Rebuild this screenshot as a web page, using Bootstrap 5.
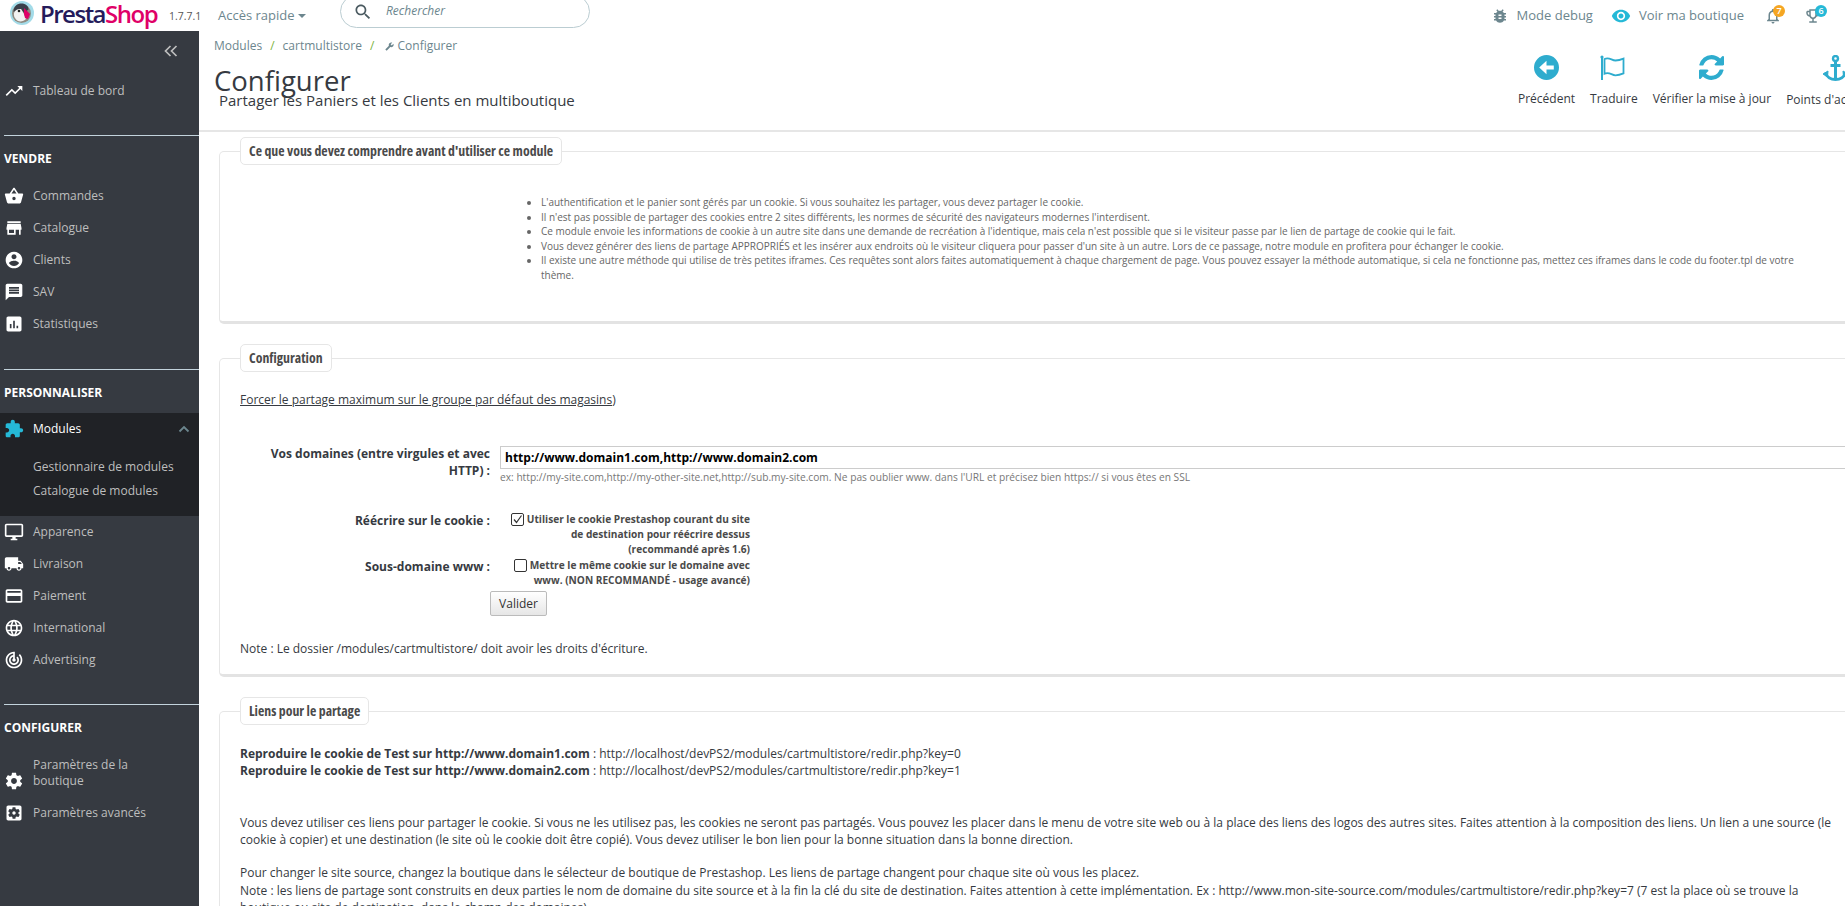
<!DOCTYPE html>
<html lang="fr">
  <head>
    <meta charset="UTF-8" />
    <meta name="viewport" content="width=device-width, initial-scale=1" />
    <title>Configurer - PrestaShop</title>
    <link href="https://cdn.jsdelivr.net/npm/bootstrap@5.3.0/dist/css/bootstrap.min.css" rel="stylesheet" />
    <style>
      html, body { height: 906px; overflow: hidden; }
      body { font-family: "Open Sans", sans-serif; font-size: 12px; color: #363a41; background: #fff; }
      .ps-top { height: 31px; overflow: hidden; color: #6c868e; }
      .ps-logo { width: 169px; flex: none; padding-left: 10px; }
      .ps-word { font-family: "Open Sans", sans-serif; font-size: 24px; font-weight: 600; letter-spacing: -1.5px; color: #251b5b; line-height: 31px; margin-left: 6px; margin-top: -5px; }
      .ps-word span { color: #df0067; }
      .ps-ver { width: 49px; flex: none; font-size: 10.5px; margin-top: 3px; color: #555; }
      .ps-quick { width: 122px; flex: none; font-size: 13px; }
      .ps-caret { display: inline-block; border: 4px solid transparent; border-top-color: #6c868e; border-bottom: 0; margin-left: 3px; vertical-align: middle; }
      .ps-search { width: 250px; height: 33px; flex: none; margin-top: -8px; padding: 8px 0 0 12px; border: 1px solid #bbcdd2; border-radius: 17px; }
      .ps-search em { margin-left: 13px; margin-top: -2px; font-size: 12px; }
      .ps-top-r { margin-left: auto; padding-right: 23px; font-size: 13px; }
      .ps-count { position: absolute; top: -2px; right: -5px; width: 12px; height: 12px; border-radius: 50%; color: #fff; font-size: 9px; line-height: 12px; text-align: center; font-weight: 600; }
      .ps-side { width: 199px; height: 875px; flex: none; background: #363a41; color: #bebebe; font-size: 12px; }
      .ps-collapse { height: 43px; padding: 10px 21px 0 0; text-align: right; }
      .ps-sep { height: 1px; margin: 0 0 0 4px; background: #c3d3dc; opacity: 1; border: 0; }
      .ps-cap { color: #fff; font-weight: 700; font-size: 12px; padding-left: 4px; height: 44px; line-height: 46px; }
      .ps-item { height: 32px; padding-left: 4px; color: #bebebe; text-decoration: none; }
      .ps-item svg { flex: none; margin-right: 9px; fill: #fff; }
      .ps-first { padding-top: 2px; }
      .ps-two { height: 48px; line-height: 16px; }
      .ps-on { background: #202226; height: 103px; }
      .ps-on .ps-item { color: #fff; }
      .ps-sub { display: block; padding-left: 33px; height: 24px; line-height: 24px; color: #bebebe; }
      .ps-main { width: 1646px; flex: none; overflow: hidden; }
      .ps-head { height: 101px; border-bottom: 2px solid #e6e6e6; }
      .ps-head-l { width: 1319px; flex: none; padding: 7px 0 0 15px; }
      .ps-crumb { font-size: 12px; color: #6c868e; line-height: 16px; }
      .ps-crumb i { font-style: normal; color: #7cb342; margin: 0 8px; }
      .ps-title { font-size: 27.5px; font-weight: 400; line-height: 40px; margin: 7px 0 0; color: #363a41; }
      .ps-subt { font-size: 15px; line-height: 20px; margin: -11px 0 0 5px; }
      .ps-tools { flex: none; padding-top: 24px; gap: 15px; }
      .ps-tool { text-align: center; white-space: nowrap; line-height: 16px; }
      .ps-tool svg { display: block; margin: 0 auto 11px; fill: #2eacce; }
      .ps-body { width: 1800px; padding: 5px 0 0 20px; }
      .ps-fs { border: 1px solid #e6e6e6; border-bottom: 3px solid #e3e3e3; border-radius: 5px; padding: 0 20px; margin: 0 0 20px; }
      .ps-fs legend { float: none; width: auto; margin: 0; padding: 0 8px; height: 28px; line-height: 26px; background: #fff; border: 1px solid #e6e6e6; border-radius: 5px; font-family: "Open Sans", sans-serif; font-stretch: 75%; font-weight: 700; font-size: 13.8px; color: #4a4a4a; }
      .ps-list { margin: 30px 0 39px 291px; padding: 0 0 0 10px; font-size: 10px; line-height: 14.5px; color: #666; width: 1270px; }
      .ps-force { margin: 20px 0 37px; line-height: 16px; }
      .ps-force a { color: #363a41; }
      .ps-row { display: flex; }
      .ps-lab { width: 250px; flex: none; text-align: right; padding-right: 0; font-weight: 700; font-size: 12px; line-height: 17px; }
      .ps-field { margin-left: 10px; width: 1400px; padding-top: 1px; }
      .ps-input { display: block; width: 100%; height: 23px; border: 1px solid #ccc; padding: 0 4px; font-weight: 700; font-size: 12px; color: #000; line-height: 21px; }
      .ps-help { font-size: 10.2px; color: #777; line-height: 16px; }
      .ps-chk { width: 260px; margin-left: 0; text-align: right; font-weight: 700; font-size: 10.15px; line-height: 15px; color: #4a4a4a; }
      .ps-box { display: inline-block; width: 13px; height: 13px; border: 1px solid #333; border-radius: 2px; vertical-align: -3px; margin-right: 3px; background: #fff; }
      .ps-box svg { display: block; }
      .ps-btn { margin: 3px 0 0 250px; width: 57px; height: 25px; padding: 0; font-size: 12px; color: #333; border: 1px solid #bbb; border-radius: 2px; background: linear-gradient(#fff, #e6e6e6); }
      .ps-note { margin: 25px 0 17px; line-height: 16px; }
      .ps-links { margin: 20px 0 0; line-height: 17px; }
      .ps-para { line-height: 17px; margin: 35px 0 16px; white-space: nowrap; }
      .ps-para2 { line-height: 17.5px; margin: 0; white-space: nowrap; }
    </style>
  </head>
  <body>
    <header class="ps-top d-flex align-items-center">
      <div class="ps-logo d-flex align-items-center">
        <svg width="24" height="26" viewBox="0 0 24 26" style="margin-top:-5px">
          <circle cx="12" cy="13" r="12" fill="#a3dbe8" />
          <circle cx="11.500" cy="13.500" r="9.500" fill="#8f8a80" />
          <path d="M3.500 12c0-6 4-8.500 8-8.500s7 2.500 7 6L14 13l-3-4-4 1z" fill="#3a3f4a" />
          <path d="M4 13c1-3 4-4.500 7-4l3 5 2 5c-2 2-5 3-8 2-3-1.500-4.500-5-4-8z" fill="#f2f2f2" />
          <path d="M14 8l6 6-2 5-3-1-1-4z" fill="#df0067" />
          <circle cx="9" cy="11" r="1.300" fill="#222" />
        </svg>
        <span class="ps-word">Presta<span>Shop</span></span>
      </div>
      <span class="ps-ver">1.7.7.1</span>
      <span class="ps-quick">Accès rapide<span class="ps-caret"></span></span>
      <div class="ps-search d-flex align-items-start">
        <svg width="20" height="20" viewBox="0 0 24 24" fill="#4a5a60" style="margin-top:-2px"><path d="M15.5 14h-.79l-.28-.27C15.41 12.59 16 11.11 16 9.5 16 5.91 13.09 3 9.5 3S3 5.91 3 9.5 5.91 16 9.5 16c1.61 0 3.09-.59 4.23-1.57l.27.28v.79l5 4.99L20.49 19l-4.99-5zm-6 0C7.01 14 5 11.99 5 9.5S7.01 5 9.5 5 14 7.01 14 9.5 11.99 14 9.5 14z"/></svg>
        <em>Rechercher</em>
      </div>
      <div class="ps-top-r d-flex align-items-center">
        <svg class="me-2" width="18" height="18" viewBox="0 0 24 24" fill="#6c868e"><path d="M20 8h-2.81c-.45-.78-1.07-1.45-1.82-1.96L17 4.41 15.59 3l-2.17 2.17C12.96 5.06 12.49 5 12 5c-.49 0-.96.06-1.41.17L8.41 3 7 4.41l1.62 1.63C7.88 6.55 7.26 7.22 6.81 8H4v2h2.09c-.05.33-.09.66-.09 1v1H4v2h2v1c0 .34.04.67.09 1H4v2h2.81c1.04 1.79 2.97 3 5.19 3s4.15-1.21 5.19-3H20v-2h-2.09c.05-.33.09-.66.09-1v-1h2v-2h-2v-1c0-.34-.04-.67-.09-1H20V8zm-6 8h-4v-2h4v2zm0-4h-4v-2h4v2z"/></svg>
        <span style="margin-right:18px">Mode debug</span>
        <svg class="me-2" width="20" height="20" viewBox="0 0 24 24" fill="#25b9d7"><path d="M12 4.5C7 4.5 2.730 7.610 1 12c1.730 4.390 6 7.500 11 7.500s9.270-3.110 11-7.500c-1.730-4.390-6-7.500-11-7.500zM12 17c-2.760 0-5-2.240-5-5s2.240-5 5-5 5 2.240 5 5-2.240 5-5 5zm0-8c-1.660 0-3 1.340-3 3s1.340 3 3 3 3-1.340 3-3-1.340-3-3-3z"/></svg>
        <span style="margin-right:20px">Voir ma boutique</span>
        <span class="position-relative" style="margin-right:22px;height:18px">
          <svg class="d-block" width="18" height="18" viewBox="0 0 24 24" fill="#6c868e"><path d="M12 22c1.100 0 2-.9 2-2h-4c0 1.100.9 2 2 2zm6-6v-5c0-3.070-1.630-5.640-4.500-6.320V4c0-.83-.67-1.500-1.500-1.500s-1.500.67-1.500 1.500v.68C7.640 5.360 6 7.920 6 11v5l-2 2v1h16v-1l-2-2zm-2 1H8v-6c0-2.480 1.510-4.500 4-4.500s4 2.020 4 4.500v6z"/></svg>
          <span class="ps-count" style="background:#f5a623;right:-3px">7</span>
        </span>
        <span class="position-relative" style="height:18px">
          <svg class="d-block" width="18" height="18" viewBox="0 0 24 24" fill="#6c868e"><path d="M19 5h-2V3H7v2H5c-1.100 0-2 .9-2 2v1c0 2.550 1.920 4.630 4.390 4.940.63 1.500 1.980 2.630 3.610 2.960V19H7v2h10v-2h-4v-3.100c1.630-.33 2.980-1.460 3.610-2.960C19.080 12.630 21 10.550 21 8V7c0-1.100-.9-2-2-2zM5 8V7h2v3.820C5.840 10.400 5 9.300 5 8zm7 6c-1.650 0-3-1.350-3-3V5h6v6c0 1.650-1.350 3-3 3zm7-6c0 1.300-.84 2.400-2 2.820V7h2v1z"/></svg>
          <span class="ps-count" style="background:#25b9d7">6</span>
        </span>
      </div>
    </header>

    <div class="d-flex">
      <nav class="ps-side">
        <div class="ps-collapse">
          <svg width="14" height="12" viewBox="0 0 14 12" fill="none" stroke="#bebebe" stroke-width="1.700"><path d="M6.500 1L1.500 6l5 5M12.500 1l-5 5 5 5"/></svg>
        </div>
        <a class="ps-item ps-first d-flex align-items-center" href="#">
          <svg width="20" height="20" viewBox="0 0 24 24"><path d="M16 6l2.290 2.290-4.880 4.880-4-4L2 16.590 3.410 18l6-6 4 4 6.300-6.290L22 12V6z"/></svg>Tableau de bord
        </a>
        <hr class="ps-sep" style="margin-top:29px" />
        <div class="ps-cap">VENDRE</div>
        <a class="ps-item d-flex align-items-center" href="#"><svg width="20" height="20" viewBox="0 0 24 24"><path d="M17.210 9l-4.380-6.560c-.19-.28-.51-.42-.83-.42-.32 0-.64.14-.83.43L6.790 9H2c-.55 0-1 .45-1 1 0 .09.01.18.04.27l2.540 9.270c.23.84 1 1.460 1.920 1.460h13c.92 0 1.690-.62 1.930-1.460l2.540-9.270L23 10c0-.55-.45-1-1-1h-4.790zM9 9l3-4.400L15 9H9zm3 8c-1.100 0-2-.9-2-2s.9-2 2-2 2 .9 2 2-.9 2-2 2z"/></svg>Commandes</a>
        <a class="ps-item d-flex align-items-center" href="#"><svg width="20" height="20" viewBox="0 0 24 24"><path d="M20 4H4v2h16V4zm1 10v-2l-1-5H4l-1 5v2h1v6h10v-6h4v6h2v-6h1zm-9 4H6v-4h6v4z"/></svg>Catalogue</a>
        <a class="ps-item d-flex align-items-center" href="#"><svg width="20" height="20" viewBox="0 0 24 24"><path d="M12 2C6.480 2 2 6.480 2 12s4.480 10 10 10 10-4.480 10-10S17.520 2 12 2zm0 3c1.660 0 3 1.340 3 3s-1.340 3-3 3-3-1.340-3-3 1.340-3 3-3zm0 14.200c-2.500 0-4.710-1.280-6-3.220.03-1.990 4-3.080 6-3.080 1.990 0 5.970 1.090 6 3.080-1.290 1.940-3.500 3.220-6 3.220z"/></svg>Clients</a>
        <a class="ps-item d-flex align-items-center" href="#"><svg width="20" height="20" viewBox="0 0 24 24"><path d="M20 2H4c-1.100 0-1.990.9-1.990 2L2 22l4-4h14c1.100 0 2-.9 2-2V4c0-1.100-.9-2-2-2zm-2 12H6v-2h12v2zm0-3H6V9h12v2zm0-3H6V6h12v2z"/></svg>SAV</a>
        <a class="ps-item d-flex align-items-center" href="#"><svg width="20" height="20" viewBox="0 0 24 24"><path d="M19 3H5c-1.100 0-2 .9-2 2v14c0 1.100.9 2 2 2h14c1.100 0 2-.9 2-2V5c0-1.100-.9-2-2-2zM9 17H7v-5h2v5zm4 0h-2V8h2v9zm4 0h-2v-3h2v3z"/></svg>Statistiques</a>
        <hr class="ps-sep" style="margin-top:29px" />
        <div class="ps-cap" style="height:43px">PERSONNALISER</div>
        <div class="ps-on">
          <a class="ps-item d-flex align-items-center" href="#">
            <svg width="20" height="20" viewBox="0 0 24 24" style="fill:#25b9d7"><path d="M20.500 11H19V7c0-1.100-.9-2-2-2h-4V3.500C13 2.120 11.880 1 10.500 1S8 2.120 8 3.500V5H4c-1.100 0-1.990.9-1.990 2v3.800H3.500c1.490 0 2.700 1.210 2.700 2.700s-1.210 2.700-2.700 2.700H2V20c0 1.100.9 2 2 2h3.800v-1.500c0-1.490 1.210-2.700 2.700-2.700 1.490 0 2.700 1.210 2.700 2.700V22H17c1.100 0 2-.9 2-2v-4h1.500c1.380 0 2.500-1.120 2.500-2.500S21.880 11 20.500 11z"/></svg>Modules
            <svg class="ms-auto" width="12" height="8" viewBox="0 0 12 8" style="fill:none;stroke:#6c868e;stroke-width:1.800;margin-right:9px"><path d="M1.500 6.500L6 2l4.500 4.500"/></svg>
          </a>
          <div style="height:10px"></div>
          <a class="ps-sub text-decoration-none" href="#">Gestionnaire de modules</a>
          <a class="ps-sub text-decoration-none" href="#">Catalogue de modules</a>
        </div>
        <a class="ps-item d-flex align-items-center" href="#"><svg width="20" height="20" viewBox="0 0 24 24"><path d="M21 2H3c-1.100 0-2 .9-2 2v12c0 1.100.9 2 2 2h7v2H8v2h8v-2h-2v-2h7c1.100 0 2-.9 2-2V4c0-1.100-.9-2-2-2zm0 14H3V4h18v12z"/></svg>Apparence</a>
        <a class="ps-item d-flex align-items-center" href="#"><svg width="20" height="20" viewBox="0 0 24 24"><path d="M20 8h-3V4H3c-1.100 0-2 .9-2 2v11h2c0 1.660 1.340 3 3 3s3-1.340 3-3h6c0 1.660 1.340 3 3 3s3-1.340 3-3h2v-5l-3-4zM6 18.500c-.83 0-1.500-.67-1.500-1.500s.67-1.500 1.500-1.500 1.500.67 1.500 1.500-.67 1.500-1.500 1.500zm13.500-9l1.960 2.500H17V9.500h2.500zm-1.500 9c-.83 0-1.500-.67-1.500-1.500s.67-1.500 1.500-1.500 1.500.67 1.500 1.500-.67 1.500-1.500 1.500z"/></svg>Livraison</a>
        <a class="ps-item d-flex align-items-center" href="#"><svg width="20" height="20" viewBox="0 0 24 24"><path d="M20 4H4c-1.110 0-1.990.89-1.990 2L2 18c0 1.110.89 2 2 2h16c1.110 0 2-.89 2-2V6c0-1.110-.89-2-2-2zm0 14H4v-6h16v6zm0-10H4V6h16v2z"/></svg>Paiement</a>
        <a class="ps-item d-flex align-items-center" href="#"><svg width="20" height="20" viewBox="0 0 24 24"><path d="M11.990 2C6.470 2 2 6.480 2 12s4.470 10 9.990 10C17.520 22 22 17.520 22 12S17.520 2 11.990 2zm6.930 6h-2.950c-.32-1.250-.78-2.450-1.380-3.560 1.840.63 3.370 1.910 4.330 3.560zM12 4.040c.83 1.200 1.480 2.530 1.910 3.960h-3.820c.43-1.430 1.080-2.760 1.910-3.960zM4.260 14C4.100 13.360 4 12.690 4 12s.1-1.360.26-2h3.380c-.08.66-.14 1.320-.14 2 0 .68.06 1.340.14 2H4.260zm.82 2h2.950c.32 1.250.78 2.450 1.380 3.560-1.840-.63-3.370-1.900-4.330-3.560zm2.950-8H5.080c.96-1.660 2.490-2.930 4.330-3.560C8.810 5.550 8.350 6.750 8.030 8zM12 19.960c-.83-1.200-1.480-2.530-1.910-3.960h3.820c-.43 1.430-1.080 2.760-1.910 3.960zM14.340 14H9.660c-.09-.66-.16-1.320-.16-2 0-.68.07-1.350.16-2h4.680c.09.65.16 1.320.16 2 0 .68-.07 1.340-.16 2zm.25 5.560c.6-1.110 1.060-2.310 1.380-3.560h2.950c-.96 1.650-2.490 2.930-4.330 3.560zM16.360 14c.08-.66.14-1.320.14-2 0-.68-.06-1.340-.14-2h3.380c.16.64.26 1.310.26 2s-.1 1.360-.26 2h-3.380z"/></svg>International</a>
        <a class="ps-item d-flex align-items-center" href="#"><svg width="20" height="20" viewBox="0 0 24 24"><path d="M19.070 4.930l-1.410 1.410C19.100 7.790 20 9.790 20 12c0 4.420-3.580 8-8 8s-8-3.580-8-8c0-4.080 3.050-7.440 7-7.930v2.020C8.160 6.570 6 9.030 6 12c0 3.310 2.690 6 6 6s6-2.690 6-6c0-1.660-.67-3.160-1.760-4.240l-1.410 1.410C15.550 9.900 16 10.900 16 12c0 2.210-1.790 4-4 4s-4-1.790-4-4c0-1.860 1.280-3.410 3-3.860v2.140c-.6.35-1 .98-1 1.720 0 1.100.9 2 2 2s2-.9 2-2c0-.74-.4-1.380-1-1.720V2h-1C6.480 2 2 6.480 2 12s4.480 10 10 10 10-4.480 10-10c0-2.760-1.120-5.260-2.930-7.070z"/></svg>Advertising</a>
        <hr class="ps-sep" style="margin-top:28px" />
        <div class="ps-cap">CONFIGURER</div>
        <a class="ps-item ps-two d-flex align-items-end" href="#"><svg width="20" height="20" viewBox="0 0 24 24" style="margin-bottom:6px"><path d="M19.430 12.980c.04-.32.07-.64.07-.98s-.03-.66-.07-.98l2.110-1.650c.19-.15.24-.42.12-.64l-2-3.460c-.12-.22-.39-.3-.61-.22l-2.490 1c-.52-.4-1.080-.73-1.690-.98l-.38-2.650C14.460 2.180 14.250 2 14 2h-4c-.25 0-.46.18-.49.42l-.38 2.650c-.61.25-1.170.59-1.690.98l-2.490-1c-.23-.09-.49 0-.61.22l-2 3.460c-.13.22-.07.49.12.64l2.110 1.650c-.04.32-.07.65-.07.98s.03.66.07.98l-2.110 1.650c-.19.15-.24.42-.12.64l2 3.460c.12.22.39.3.61.22l2.490-1c.52.4 1.080.73 1.690.98l.38 2.650c.03.24.24.42.49.42h4c.25 0 .46-.18.49-.42l.38-2.650c.61-.25 1.170-.59 1.690-.98l2.490 1c.23.09.49 0 .61-.22l2-3.460c.12-.22.07-.49-.12-.64l-2.110-1.650zM12 15.500c-1.930 0-3.500-1.570-3.500-3.500s1.570-3.500 3.500-3.500 3.500 1.570 3.500 3.500-1.570 3.500-3.500 3.500z"/></svg><span style="padding-bottom:8px">Paramètres de la<br />boutique</span></a>
        <a class="ps-item d-flex align-items-center" href="#"><svg width="20" height="20" viewBox="0 0 24 24"><path d="M12 10c-1.100 0-2 .9-2 2s.9 2 2 2 2-.9 2-2-.9-2-2-2zm7-7H5c-1.110 0-2 .9-2 2v14c0 1.100.89 2 2 2h14c1.110 0 2-.9 2-2V5c0-1.100-.89-2-2-2zm-1.750 9c0 .23-.02.46-.05.68l1.480 1.160c.13.11.17.3.08.45l-1.400 2.420c-.09.15-.27.21-.43.15l-1.740-.7c-.36.28-.76.51-1.180.69l-.26 1.850c-.03.17-.18.3-.35.3h-2.800c-.17 0-.32-.13-.35-.29l-.26-1.850c-.43-.18-.82-.41-1.180-.69l-1.740.7c-.16.06-.34 0-.43-.15l-1.400-2.420c-.09-.15-.05-.34.08-.45l1.480-1.160c-.03-.23-.05-.46-.05-.69 0-.23.02-.46.05-.68l-1.480-1.160c-.13-.11-.17-.3-.08-.45l1.400-2.420c.09-.15.27-.21.43-.15l1.740.7c.36-.28.76-.51 1.180-.69l.26-1.850c.03-.17.18-.3.35-.3h2.800c.17 0 .32.13.35.29l.26 1.850c.43.18.82.41 1.180.69l1.740-.7c.16-.06.34 0 .43.15l1.400 2.420c.09.15.05.34-.08.45l-1.480 1.160c.03.23.05.46.05.69z"/></svg>Paramètres avancés</a>
      </nav>

      <main class="ps-main">
        <div class="ps-head d-flex">
          <div class="ps-head-l">
            <div class="ps-crumb">Modules<i>/</i>cartmultistore<i>/</i>
              <svg width="9" height="9" viewBox="0 0 24 24" fill="#6c868e" style="transform:scaleX(-1)"><path d="M22.700 19l-9.100-9.100c.9-2.300.4-5-1.500-6.900-2-2-5-2.400-7.400-1.300L9 6 6 9 1.600 4.700C.4 7.100.9 10.100 2.900 12.100c1.900 1.900 4.600 2.400 6.900 1.500l9.100 9.100c.4.4 1 .4 1.400 0l2.300-2.300c.5-.4.5-1.100.1-1.400z"/></svg>
              Configurer</div>
            <h1 class="ps-title">Configurer</h1>
            <div class="ps-subt">Partager les Paniers et les Clients en multiboutique</div>
          </div>
          <div class="ps-tools d-flex">
            <div class="ps-tool">
              <svg width="25" height="25" viewBox="0 0 24 24"><path d="M12 0a12 12 0 100 24 12 12 0 000-24zm7 14h-7v4.500L5 12l7-6.500V10h7z"/></svg>
              Précédent
            </div>
            <div class="ps-tool">
              <svg width="27" height="25" viewBox="0 0 27 25" style="fill:none;stroke:#2eacce;stroke-width:1.800"><path d="M2 2.500V25" stroke-width="2"/><circle cx="2" cy="2" r="1.600" fill="#2eacce" stroke="none"/><path d="M4.500 4c5-2.200 7 1.500 11 1.500 2.500 0 5-.6 8-1.900v14.800c-3 1.300-5.500 1.900-8 1.900-4 0-6-3.700-11-1.500z"/></svg>
              Traduire
            </div>
            <div class="ps-tool">
              <svg width="25" height="25" viewBox="0 0 1536 1536"><path d="M1511 928q0 5-1 7-64 268-268 434.500t-478 166.500q-146 0-282.500-55t-243.500-157l-129 129q-19 19-45 19t-45-19-19-45v-448q0-26 19-45t45-19h448q26 0 45 19t19 45-19 45l-137 137q71 66 161 102t187 36q134 0 250-65t186-179q11-17 53-117 8-23 30-23h192q13 0 22.500 9.500t9.500 22.500zm25-800v448q0 26-19 45t-45 19h-448q-26 0-45-19t-19-45 19-45l138-138q-148-137-349-137-134 0-250 65t-186 179q-11 17-53 117-8 23-30 23h-199q-13 0-22.500-9.500t-9.500-22.500v-7q65-268 270-434.500t480-166.500q146 0 284 55.500t245 156.500l130-129q19-19 45-19t45 19 19 45z"/></svg>
              Vérifier la mise à jour
            </div>
            <div class="ps-tool">
              <svg width="25" height="26" viewBox="0 0 25 26" style="fill:none;stroke:#2eacce;stroke-width:3"><circle cx="12.500" cy="3.500" r="2.500" stroke-width="2.400"/><path d="M12.500 6v18.500M7.500 10.500h10M2.500 17.500c1 4.500 5.500 7 10 7s9-2.500 10-7"/><path d="M0 19l5-3-.5 6zM25 19l-5-3 .5 6z" fill="#2eacce" stroke-width="1"/></svg>
              Points d'accroche
            </div>
          </div>
        </div>

        <div class="ps-body">
          <fieldset class="ps-fs">
            <legend>Ce que vous devez comprendre avant d'utiliser ce module</legend>
            <ul class="ps-list">
              <li>L'authentification et le panier sont gérés par un cookie. Si vous souhaitez les partager, vous devez partager le cookie.</li>
              <li>Il n'est pas possible de partager des cookies entre 2 sites différents, les normes de sécurité des navigateurs modernes l'interdisent.</li>
              <li>Ce module envoie les informations de cookie à un autre site dans une demande de recréation à l'identique, mais cela n'est possible que si le visiteur passe par le lien de partage de cookie qui le fait.</li>
              <li>Vous devez générer des liens de partage APPROPRIÉS et les insérer aux endroits où le visiteur cliquera pour passer d'un site à un autre. Lors de ce passage, notre module en profitera pour échanger le cookie.</li>
              <li>Il existe une autre méthode qui utilise de très petites iframes. Ces requêtes sont alors faites automatiquement à chaque chargement de page. Vous pouvez essayer la méthode automatique, si cela ne fonctionne pas, mettez ces iframes dans le code du footer.tpl de votre<br />thème.</li>
            </ul>
          </fieldset>

          <fieldset class="ps-fs">
            <legend>Configuration</legend>
            <p class="ps-force"><a href="#">Forcer le partage maximum sur le groupe par défaut des magasins</a>)</p>
            <div class="ps-row" style="margin-bottom:27px">
              <div class="ps-lab">Vos domaines (entre virgules et avec<br />HTTP) :</div>
              <div class="ps-field">
                <div class="ps-input">http://www.domain1.com,http://www.domain2.com</div>
                <div class="ps-help">ex: http://my-site.com,http://my-other-site.net,http://sub.my-site.com. Ne pas oublier www. dans l'URL et précisez bien https:// si vous êtes en SSL</div>
              </div>
            </div>
            <div class="ps-row">
              <div class="ps-lab">Réécrire sur le cookie :</div>
              <div class="ps-chk"><span class="ps-box"><svg width="11" height="11" viewBox="0 0 11 11" fill="none" stroke="#333" stroke-width="1.200"><path d="M2 5.500l2.500 3L9.500 1.500"/></svg></span>Utiliser le cookie Prestashop courant du site<br />de destination pour réécrire dessus<br />(recommandé après 1.6)</div>
            </div>
            <div class="ps-row" style="margin-top:1px">
              <div class="ps-lab">Sous-domaine www :</div>
              <div class="ps-chk"><span class="ps-box"></span>Mettre le même cookie sur le domaine avec<br />www. (NON RECOMMANDÉ - usage avancé)</div>
            </div>
            <button type="button" class="btn ps-btn">Valider</button>
            <p class="ps-note">Note : Le dossier /modules/cartmultistore/ doit avoir les droits d'écriture.</p>
          </fieldset>

          <fieldset class="ps-fs">
            <legend>Liens pour le partage</legend>
            <p class="ps-links"><b>Reproduire le cookie de Test sur http://www.domain1.com</b> : http://localhost/devPS2/modules/cartmultistore/redir.php?key=0<br /><b>Reproduire le cookie de Test sur http://www.domain2.com</b> : http://localhost/devPS2/modules/cartmultistore/redir.php?key=1</p>
            <p class="ps-para">Vous devez utiliser ces liens pour partager le cookie. Si vous ne les utilisez pas, les cookies ne seront pas partagés. Vous pouvez les placer dans le menu de votre site web ou à la place des liens des logos des autres sites. Faites attention à la composition des liens. Un lien a une source (le<br />cookie à copier) et une destination (le site où le cookie doit être copié). Vous devez utiliser le bon lien pour la bonne situation dans la bonne direction.</p>
            <p class="ps-para2">Pour changer le site source, changez la boutique dans le sélecteur de boutique de Prestashop. Les liens de partage changent pour chaque site où vous les placez.<br />Note : les liens de partage sont construits en deux parties le nom de domaine du site source et à la fin la clé du site de destination. Faites attention à cette implémentation. Ex : http://www.mon-site-source.com/modules/cartmultistore/redir.php?key=7 (7 est la place où se trouve la<br />boutique ou site de destination, dans le champ des domaines)</p>
          </fieldset>
        </div>
      </main>
    </div>

    <script src="https://cdn.jsdelivr.net/npm/bootstrap@5.3.0/dist/js/bootstrap.bundle.min.js"></script>
  </body>
</html>
